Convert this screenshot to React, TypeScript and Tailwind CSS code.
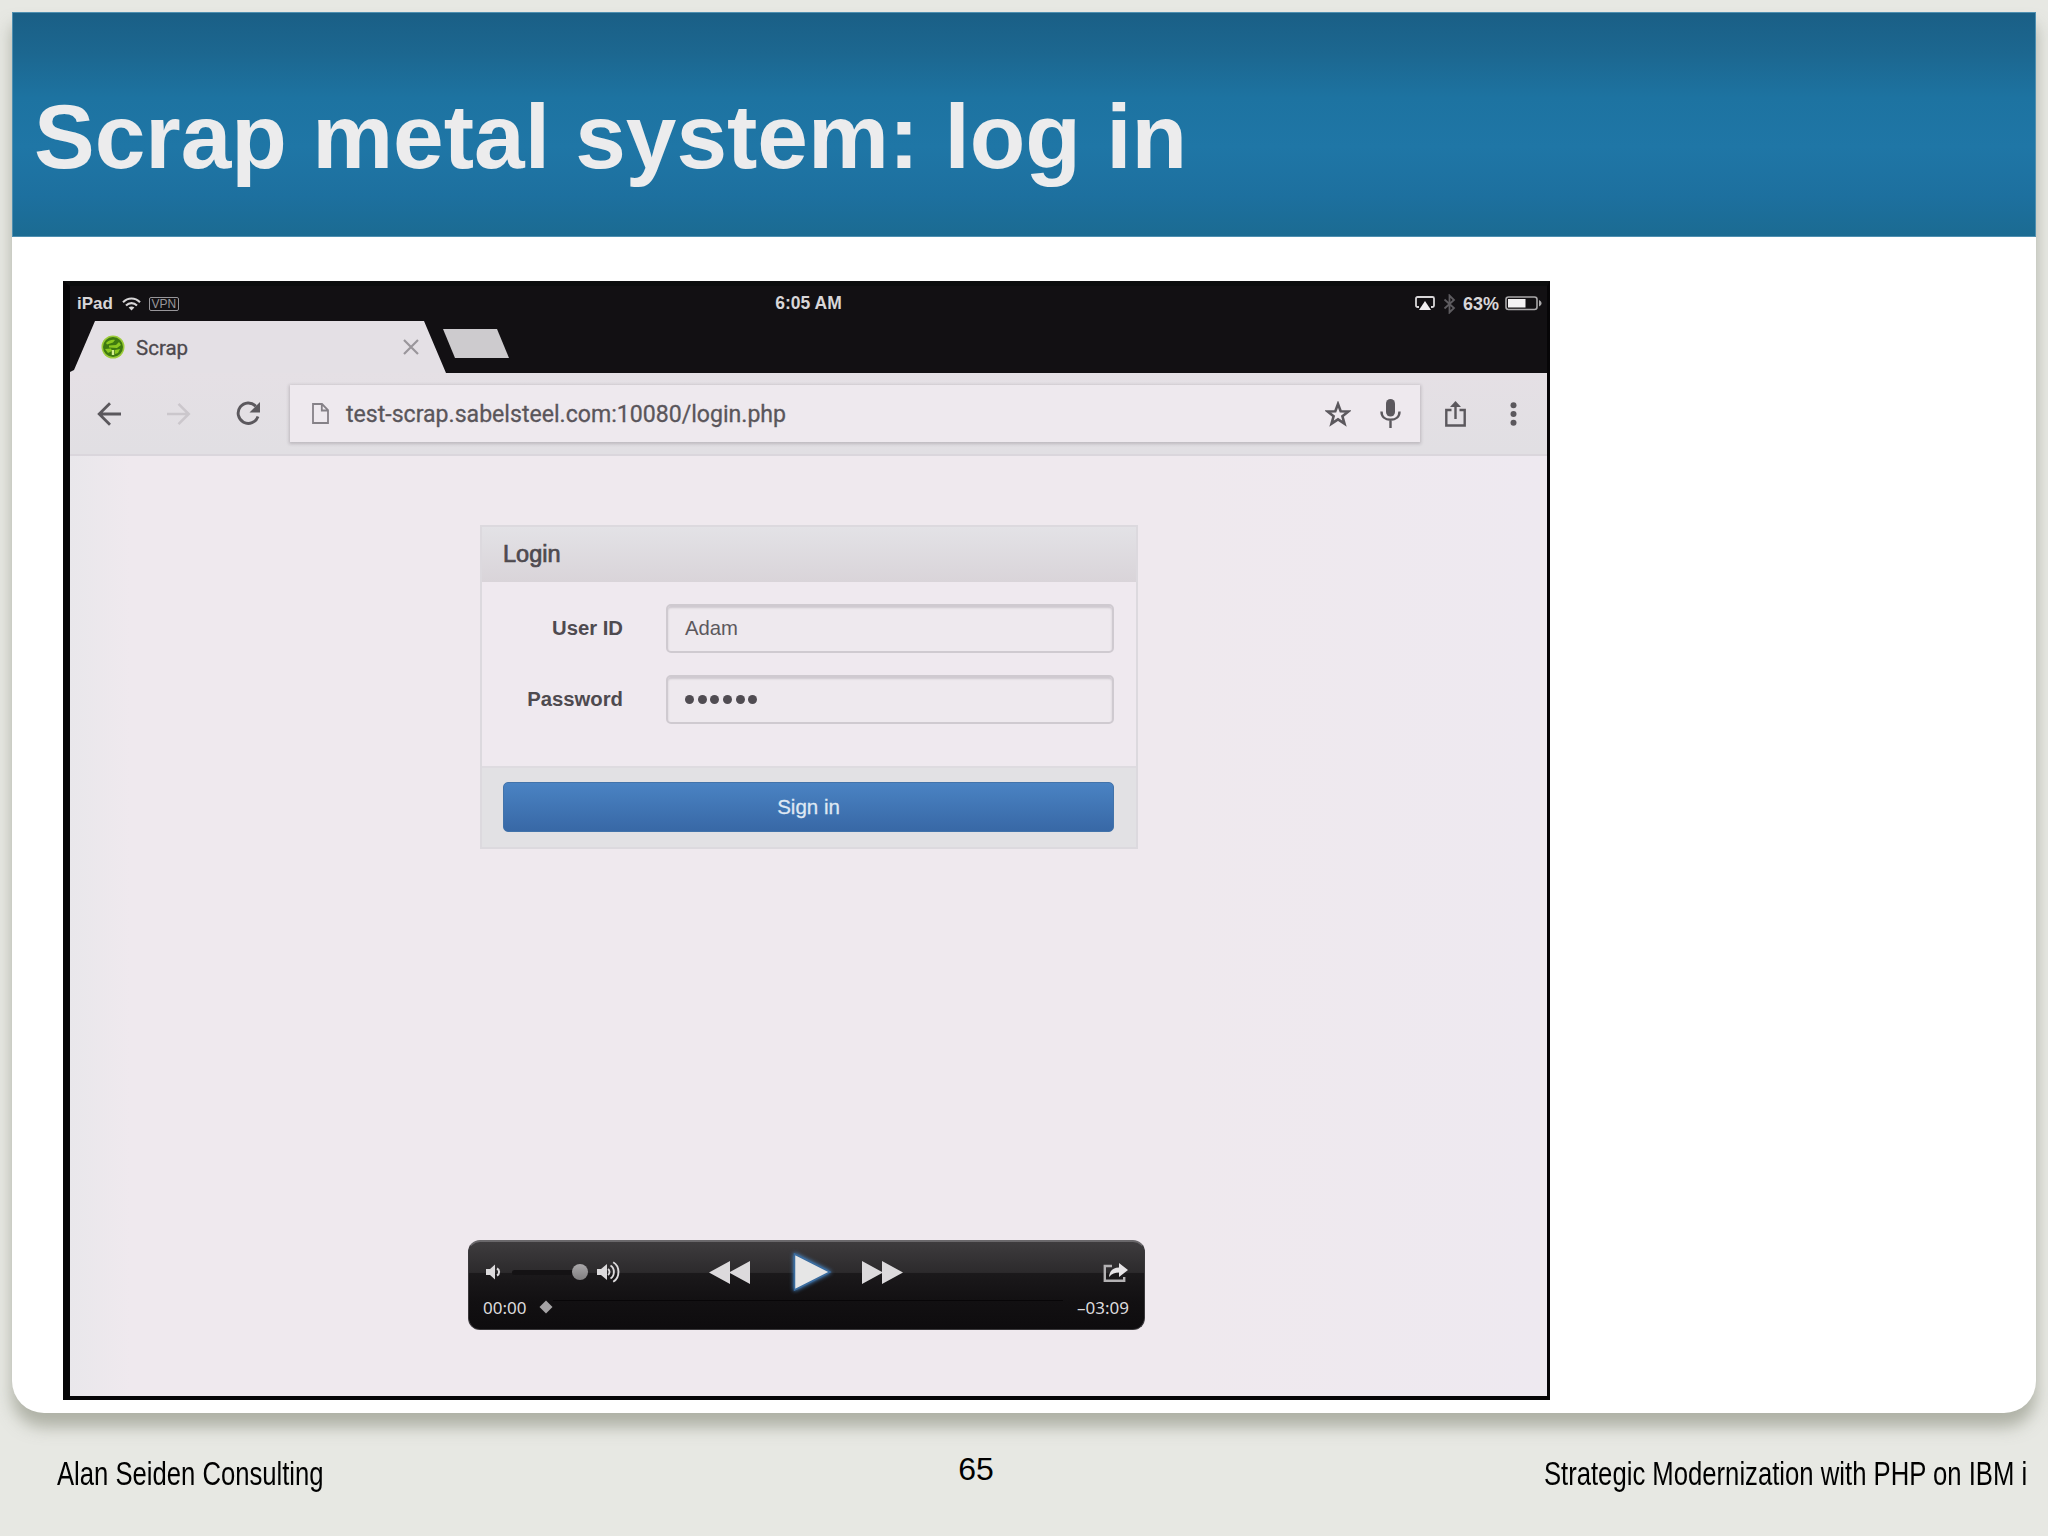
import React from "react";

function StatusBar() {
  return (
    <div className="grid h-[35px] grid-cols-3 items-center pl-[7px] pr-[5px] text-[#d8d6d8]">
      <div className="flex items-center">
        <span className="text-[17px] font-bold leading-none">iPad</span>
        <svg className="ml-[9px] h-[14px] w-[19px]" viewBox="0 0 19 14" fill="none" stroke="#d8d6d8" strokeWidth="2.1">
          <path d="M1 5.2C6 .2 13 .2 18 5.2" />
          <path d="M4 8.4c3.2-3.1 7.8-3.1 11 0" />
          <path d="M6.6 10.6 9.5 13.6l2.900-3c-1.600-1.500-4.200-1.500-5.800 0z" fill="#d8d6d8" stroke="none" />
        </svg>
        <span className="ml-[8px] flex h-[14px] w-[30px] items-center justify-center rounded-[2px] border-[1.5px] border-[#98969a] text-[12px] leading-none text-[#98969a]">
          VPN
        </span>
      </div>
      <div className="-ml-[2px] text-center text-[17.500px] font-bold leading-none">6:05 AM</div>
      <div className="flex items-center justify-end">
        <svg className="h-[15px] w-[20px]" viewBox="0 0 20 15">
          <path d="M4 11H2.500A1.500 1.500 0 0 1 1 9.500v-7A1.500 1.500 0 0 1 2.500 1h15A1.500 1.500 0 0 1 19 2.500v7a1.500 1.500 0 0 1-1.500 1.500H16" fill="none" stroke="#d8d6d8" strokeWidth="1.800" />
          <path d="M10 5 16 14H4z" fill="#f0eef0" />
        </svg>
        <svg className="ml-[8px] h-[20px] w-[13px]" viewBox="0 0 13 20" fill="none" stroke="#5e5c60" strokeWidth="1.800">
          <path d="M1.500 5.500 11 14l-4.500 4.500v-17L11 6 1.500 14.500" />
        </svg>
        <span className="ml-[7px] text-[18px] font-bold leading-none">63%</span>
        <svg className="ml-[6px] h-[15px] w-[37px]" viewBox="0 0 37 15">
          <rect x="1" y="1" width="31" height="12.500" rx="2.500" fill="none" stroke="#aaa8aa" strokeWidth="1.600" />
          <rect x="3" y="3" width="17.500" height="8.500" fill="#f4f2f4" />
          <path d="M34 4c1.800.9 2.500 2 2.500 3.300S35.800 9.700 34 10.500z" fill="#aaa8aa" />
        </svg>
      </div>
    </div>
  );
}

function TabStrip() {
  return (
    <div className="flex h-[52px]">
      <div className="flex h-[52px] w-[376px] items-center bg-[#e4e0e5] pl-[31px] [clip-path:polygon(0_100%,0_98%,4px_94%,25px_0,354px_0,376px_100%)]">
        <svg className="h-[24px] w-[24px]" viewBox="0 0 24 24">
          <circle cx="12" cy="12" r="11.500" fill="#9ccc3a" />
          <circle cx="12" cy="12" r="10" fill="#3f7a10" />
          <path d="M5 8c3-3 6-3.500 9-3l-2 2.500-6 2zM8 10.500l7-.5 3-3 2 3-4 3-8-.5zM4 14l6-.5 1 2.500-4 2zM14 15l5-1-2 4-3 1z" fill="#8cc820" />
          <path d="M12 15v5" stroke="#d8f090" strokeWidth="2.400" />
        </svg>
        <span className="ml-[11px] mt-[2px] font-['Roboto','Liberation_Sans',sans-serif] text-[20.500px] leading-none text-[#4c484d] [-webkit-text-stroke:0.300px_#4c484d]">Scrap</span>
        <svg className="ml-auto mr-[27px] h-[16px] w-[16px]" viewBox="0 0 16 16" stroke="#9a969b" strokeWidth="2.200">
          <path d="M1 1l14 14M15 1 1 15" />
        </svg>
      </div>
      <div className="-ml-[3px] mt-[8px] h-[29px] w-[66px] bg-[#cdcbce] [clip-path:polygon(0_0,54px_0,66px_100%,12px_100%)]" />
    </div>
  );
}

function Toolbar() {
  return (
    <div className="flex h-[83px] items-center border-b-2 border-[#dad6dc] bg-gradient-to-b from-[#e5e0e5] to-[#e1dfe3]">
      <svg className="ml-[27px] h-[24px] w-[24px]" viewBox="0 0 24 24" fill="none" stroke="#5b585d" strokeWidth="2.800">
        <path d="M24 12H2.500M13 1.200 2.200 12 13 22.800" />
      </svg>
      <svg className="ml-[46px] h-[24px] w-[24px]" viewBox="0 0 24 24" fill="none" stroke="#cbc7cc" strokeWidth="2.600">
        <path d="M0 12h21.500M11.500 1.800 21.700 12 11.500 22.200" />
      </svg>
      <svg className="ml-[45px] h-[25px] w-[25px]" viewBox="0 0 25 25">
        <path d="M22 15.500A10.200 10.200 0 1 1 19.800 5.200" fill="none" stroke="#5b585d" strokeWidth="2.900" />
        <path d="M24 1v10.500H13.500z" fill="#5b585d" />
      </svg>
      <div className="ml-[29px] flex h-[57px] w-[1130px] items-center bg-[#eee9ee] shadow-[0_1px_3px_1px_rgba(60,50,60,0.22)]">
        <svg className="ml-[22px] h-[21px] w-[17px]" viewBox="0 0 17 21" fill="none" stroke="#858187" strokeWidth="1.800">
          <path d="M1 1h9l6 6v13H1zM9.800 1v6.500H16" />
        </svg>
        <span className="ml-[17px] mt-[3px] font-['Roboto','Liberation_Sans',sans-serif] text-[23.100px] leading-none text-[#5a565b] [-webkit-text-stroke:0.300px_#5a565b]">
          test-scrap.sabelsteel.com:10080/login.php
        </span>
        <svg className="ml-auto h-[26px] w-[26px]" viewBox="0 0 26 26" fill="none" stroke="#5b585d" strokeWidth="2.600">
          <path d="m13 3 2.700 7.200 7.700.3-6 4.800 2.100 7.400-6.500-4.300-6.500 4.300 2.100-7.400-6-4.800 7.700-.3z" />
        </svg>
        <svg className="ml-[29px] mr-[19px] h-[29px] w-[21px]" viewBox="0 0 21 29">
          <rect x="6" y="0" width="9" height="17.500" rx="4.500" fill="#5b585d" />
          <path d="M1.500 12.500c0 5.500 3.800 8.300 9 8.300s9-2.800 9-8.300M10.500 21v8" fill="none" stroke="#5b585d" strokeWidth="2.400" />
        </svg>
      </div>
      <svg className="ml-[25px] h-[26px] w-[21px]" viewBox="0 0 21 26" fill="none" stroke="#5b585d" strokeWidth="2.400">
        <path d="M6.500 9H1.300v15.500h18.400V9h-5.200M10.500 18V3" />
        <path d="M10.500 0 16 6H5z" fill="#5b585d" stroke="none" />
      </svg>
      <svg className="ml-[44px] h-[24px] w-[7px]" viewBox="0 0 7 24" fill="#5b585d">
        <circle cx="3.500" cy="3.300" r="3" />
        <circle cx="3.500" cy="12" r="3" />
        <circle cx="3.500" cy="20.700" r="3" />
      </svg>
    </div>
  );
}

const fieldClass =
  "flex h-[49px] w-[448px] items-center rounded-[5px] border-2 border-[#cfcad0] bg-[#eee9ee] pl-[17px] shadow-[inset_0_2px_2px_rgba(80,70,85,0.2)]";

function LoginCard() {
  return (
    <div className="ml-[410px] flex h-[324px] w-[658px] flex-col border-2 border-[#dcd9de] bg-[#efe9ef]">
      <div className="flex h-[55px] items-center bg-gradient-to-b from-[#e3e2e6] to-[#d9d4d9] pl-[21px] text-[23.500px] text-[#4e4a4f] [-webkit-text-stroke:0.700px_#4e4a4f]">
        Login
      </div>
      <div className="flex flex-1 flex-col gap-[22px] pt-[22px]">
        <div className="flex items-center">
          <span className="w-[141px] text-right text-[20.300px] font-bold text-[#4e4a4f]">User ID</span>
          <div className={`${fieldClass} ml-[43px]`}>
            <span className="text-[20.300px] text-[#5c585d]">Adam</span>
          </div>
        </div>
        <div className="flex items-center">
          <span className="w-[141px] text-right text-[20.300px] font-bold text-[#4e4a4f]">Password</span>
          <div className={`${fieldClass} ml-[43px] gap-[3.700px]`}>
            {[0, 1, 2, 3, 4, 5].map((dot) => (
              <span key={dot} className="h-[9px] w-[9px] rounded-full bg-[#504c52]" />
            ))}
          </div>
        </div>
      </div>
      <div className="h-[81px] border-t-2 border-[#dedbe0] bg-[#e2e1e4] pl-[21px] pt-[14px]">
        <div className="flex h-[50px] w-[611px] items-center justify-center rounded-[5px] border border-[#4273aa] bg-gradient-to-b from-[#4a83c3] to-[#3868a6] text-[20.500px] text-[#dfe8f3] [-webkit-text-stroke:0.300px_#dfe8f3]">
          Sign in
        </div>
      </div>
    </div>
  );
}

function Player() {
  return (
    <div className="ml-[398px] flex h-[90px] w-[677px] flex-col rounded-[12px] border border-t-2 border-[#3a383b] border-t-[#6a686b] bg-[linear-gradient(to_bottom,#3e3c3e_0,#2c2a2c_35%,#1b191b_36%,#121012_68%,#0e0c0e_100%)]">
      <div className="flex h-[60px] items-center">
        <svg className="ml-[16px] h-[16px] w-[18px]" viewBox="0 0 18 16">
          <path d="M1 5h4l5-4.500v15L5 11H1z" fill="#dcdadc" />
          <path d="M12 4.500c2.800 1.500 2.800 5.500 0 7" fill="none" stroke="#dcdadc" strokeWidth="2" />
        </svg>
        <div className="ml-[9px] h-[5px] w-[62px] rounded-full bg-[#141214]" />
        <div className="-ml-[2px] h-[16px] w-[16px] rounded-full bg-gradient-to-b from-[#aaa8aa] to-[#807e80]" />
        <svg className="ml-[8px] h-[22px] w-[25px]" viewBox="0 0 25 22" fill="none" stroke="#dcdadc" strokeWidth="1.900">
          <path d="M1 8h4l6-5v16l-6-5H1z" fill="#dcdadc" stroke="none" />
          <path d="M12 8c2 1.300 2 4.700 0 6M14.500 4.500c4.500 2.500 4.500 10.500 0 13M17.200 1.200c7 4 7 15.600 0 19.600" />
        </svg>
        <svg className="ml-[88px] h-[23px] w-[42px]" viewBox="0 0 42 23" fill="#dcdadc">
          <path d="M21 0v23L0 11.500zM41 0v23L20 11.500z" />
        </svg>
        <svg className="ml-[39px] h-[44px] w-[44px] overflow-visible drop-shadow-[0_0_2px_#4e9be8]" viewBox="0 0 44 44">
          <path d="M4.500 4 40 22 4.500 40z" fill="#e6e6e6" stroke="#3a6c9f" strokeWidth="1.500" />
        </svg>
        <svg className="ml-[27px] h-[23px] w-[42px]" viewBox="0 0 42 23" fill="#dcdadc">
          <path d="M1 0v23l21-11.500zM21 0v23l21-11.500z" />
        </svg>
        <svg className="ml-auto mr-[16px] h-[21px] w-[25px]" viewBox="0 0 25 21">
          <path d="M9 4H1.800v14.800h19.400V15" fill="none" stroke="#b4b2b4" strokeWidth="2.400" />
          <path d="M6 15c.5-6 4-9.500 10-9.500V1l9 7-9 7v-4.500c-4 0-7 1-10 4.500z" fill="#e6e4e6" />
        </svg>
      </div>
      <div className="-mt-[1px] flex h-[12px] items-center text-[17px] leading-none text-[#dddbdd]">
        <span className="ml-[14px] w-[44px] font-['Noto_Sans','Open_Sans',sans-serif]">00:00</span>
        <svg className="ml-[12px] h-[14px] w-[14px]" viewBox="0 0 14 14">
          <path d="M7 .5 13.500 7 7 13.500.5 7z" fill="#a5a3a5" />
        </svg>
        <div className="-mt-[13px] h-px w-[510px] bg-[#080608]" />
        <span className="ml-auto mr-[15px] font-['Noto_Sans','Open_Sans',sans-serif]">–03:09</span>
      </div>
    </div>
  );
}

function VideoFrame() {
  return (
    <div className="ml-[51px] mt-[45px] flex h-[1119px] w-[1487px] flex-col border-b-4 border-l-[7px] border-r-[3px] border-t-[5px] border-[#060507] border-t-[#0c0d0e] bg-[#121013]">
      <StatusBar />
      <TabStrip />
      <Toolbar />
      <div className="flex flex-1 flex-col bg-[linear-gradient(to_right,#e9e7eb_0,#efe9ee_60px,#efe9ee_75%,#eee9f0_100%)] pt-[69px]">
        <LoginCard />
        <div className="mt-[391px]">
          <Player />
        </div>
      </div>
    </div>
  );
}

export default function App() {
  return (
    <div className="flex h-[1536px] w-[2048px] flex-col overflow-hidden bg-[#e7e8e3] font-['Liberation_Sans',Arial,sans-serif]">
      <div className="ml-[12px] mt-[12px] h-[1401px] w-[2024px] rounded-b-[32px] bg-white shadow-[0_14px_16px_0_rgba(120,124,105,0.5)]">
        <header className="flex h-[225px] items-start border border-[#4f8fb0] bg-[linear-gradient(to_bottom,#1a5f86_0,#1c6790_18%,#1d73a1_38%,#1f76a6_60%,#1d709f_82%,#1b6b92_100%)] pl-[21px] pt-[72px]">
          <h1 className="whitespace-nowrap text-[91px] font-bold leading-[104px] text-[#ececed]">Scrap metal system: log in</h1>
        </header>
        <div className="-mt-px">
          <VideoFrame />
        </div>
      </div>
      <footer className="grid grid-cols-3 items-start pt-[42px] text-[33px] leading-[38px] text-black">
        <span className="ml-[57px] origin-left scale-x-[0.777] whitespace-nowrap">Alan Seiden Consulting</span>
        <span className="-ml-[96px] -mt-[5px] text-center text-[32px]">65</span>
        <span className="mr-[21px] origin-right scale-x-[0.778] justify-self-end whitespace-nowrap">Strategic Modernization with PHP on IBM i</span>
      </footer>
    </div>
  );
}
